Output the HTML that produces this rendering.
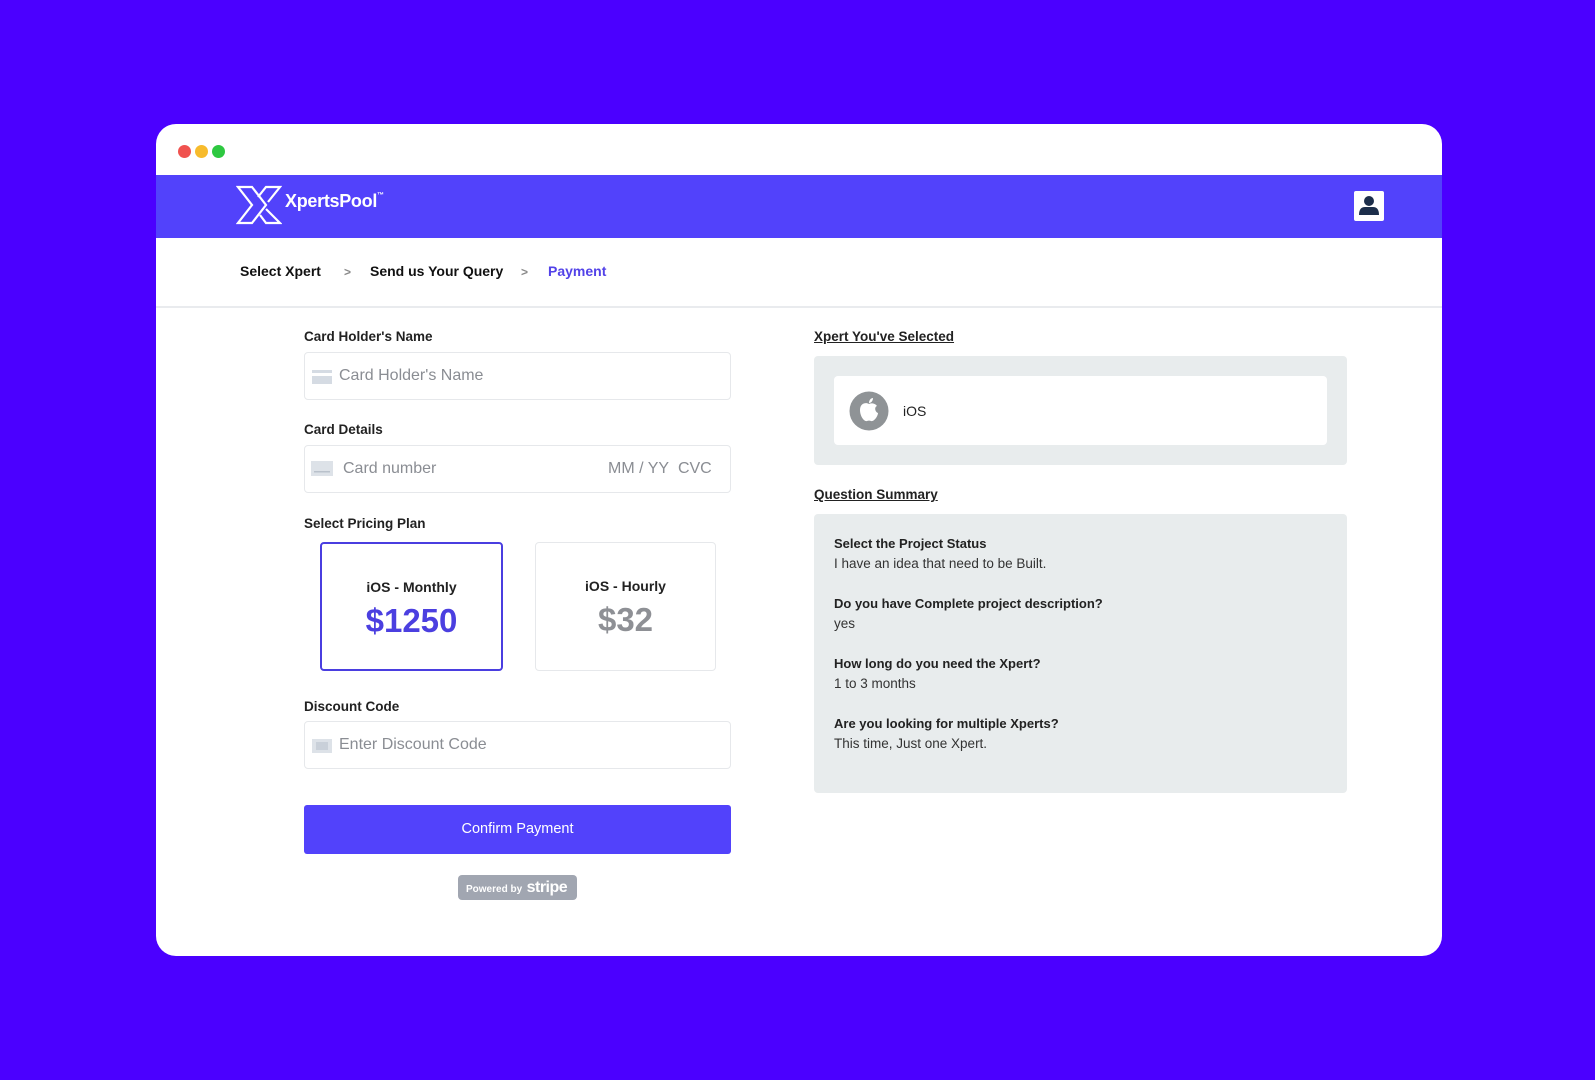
<!DOCTYPE html>
<html><head><meta charset="utf-8"><style>
*{box-sizing:border-box;margin:0;padding:0}
html,body{width:1595px;height:1080px;overflow:hidden;background:#4b00ff;font-family:"Liberation Sans",sans-serif}
.card{position:absolute;left:156px;top:124px;width:1286px;height:832px;background:#fff;border-radius:20px;overflow:hidden}
.dot{position:absolute;top:21px;width:13px;height:13px;border-radius:50%}
.hdr{position:absolute;left:0;top:51px;width:100%;height:63px;background:#5242fb}
.abs{position:absolute}
.crumb{position:absolute;top:139px;font-size:14px;font-weight:bold;color:#111}
.lbl{position:absolute;left:148px;font-size:13.5px;font-weight:bold;color:#222}
.inp{position:absolute;left:148px;width:427px;height:48px;border:1.5px solid #e6e8eb;border-radius:4px;background:#fff}
.ph{position:absolute;top:14px;font-size:16px;color:#8a8d93}
.plan{position:absolute;top:418px;height:129px;border-radius:4px;text-align:center}
.plan .t{position:absolute;width:100%;top:35px;font-size:14px;font-weight:bold;color:#222}
.plan .p{position:absolute;width:100%;top:58px;font-size:33px;font-weight:bold}
.q b{display:block;font-size:13px;color:#222;line-height:20px}
.q span{display:block;font-size:13.5px;color:#333;line-height:20px;margin-bottom:20px}
.ul{position:absolute;font-size:13.5px;font-weight:bold;color:#222;text-decoration:underline}
</style></head><body>
<div class="card">
 <div class="dot" style="left:22px;background:#f0524f"></div>
 <div class="dot" style="left:39px;background:#f7bb2c"></div>
 <div class="dot" style="left:56px;background:#2dc840"></div>
 <div class="hdr">
  <svg class="abs" style="left:80px;top:10px" width="46" height="40" viewBox="0 0 46 40" fill="none" stroke="#fff" stroke-width="2.2" stroke-linejoin="miter">
   <path d="M2 2 H16 L30 20 L16 38 H2 L16 20 Z"/>
   <path d="M22 12 L30 2 H44 L32 17"/>
   <path d="M30 24 L44 38 H30 L24 30"/>
  </svg>
  <div class="abs" style="left:129px;top:16px;font-size:18px;font-weight:bold;color:#fff;letter-spacing:-0.3px">XpertsPool<sup style="font-size:7px;vertical-align:10px">™</sup></div>
  <div class="abs" style="left:1198px;top:16px;width:30px;height:30px;background:#fff;border-radius:2px">
   <svg width="30" height="30" viewBox="0 0 30 30"><circle cx="15" cy="10" r="5" fill="#1c2e4a"/><path d="M5 24 Q5 16 11 16 H19 Q25 16 25 24 Z" fill="#1c2e4a"/></svg>
  </div>
 </div>
 <div class="crumb" style="left:84px">Select Xpert</div>
 <div class="crumb" style="left:188px;color:#888;font-size:12px;top:141px">&gt;</div>
 <div class="crumb" style="left:214px">Send us Your Query</div>
 <div class="crumb" style="left:365px;color:#888;font-size:12px;top:141px">&gt;</div>
 <div class="crumb" style="left:392px;color:#5242e8">Payment</div>
 <div class="abs" style="left:0;top:182px;width:100%;height:2px;background:#e9ebee"></div>

 <div class="lbl" style="top:205px">Card Holder's Name</div>
 <div class="inp" style="top:228px">
  <svg class="abs" style="left:7px;top:17px" width="20" height="14"><rect y="0" width="20" height="3" fill="#d5dbe3"/><rect y="6" width="20" height="8" fill="#d5dbe3"/></svg>
  <div class="ph" style="left:34px">Card Holder's Name</div></div>
 <div class="lbl" style="top:298px">Card Details</div>
 <div class="inp" style="top:321px">
  <svg class="abs" style="left:6px;top:15px" width="22" height="15"><rect width="22" height="15" fill="#dde2e8"/><rect x="3" y="10" width="16" height="1.5" fill="#b9c1cb"/></svg>
  <div class="ph" style="left:38px">Card number</div>
  <div class="ph" style="left:303px">MM / YY&nbsp; CVC</div></div>
 <div class="lbl" style="top:392px">Select Pricing Plan</div>
 <div class="plan" style="left:164px;width:183px;border:2px solid #4a3ee0"><div class="t">iOS - Monthly</div><div class="p" style="color:#4b3fe0">$1250</div></div>
 <div class="plan" style="left:379px;width:181px;border:1.5px solid #e6e8eb"><div class="t">iOS - Hourly</div><div class="p" style="color:#8e9095">$32</div></div>
 <div class="lbl" style="top:575px">Discount Code</div>
 <div class="inp" style="top:597px">
  <svg class="abs" style="left:7px;top:17px" width="20" height="14"><rect width="20" height="14" fill="#dde2e8"/><rect x="4" y="3" width="12" height="8" fill="#c9d0d9"/></svg>
  <div class="ph" style="left:34px">Enter Discount Code</div></div>
 <div class="abs" style="left:148px;top:681px;width:427px;height:49px;background:#5242fb;border-radius:3px;color:#fff;font-size:14.5px;text-align:center;line-height:49px">Confirm Payment</div>
 <div class="abs" style="left:302px;top:751px;width:119px;height:25px;background:#a1a6b1;border-radius:4px;color:#fff;line-height:25px;padding-left:8px;white-space:nowrap"><span style="font-size:10px;font-weight:bold">Powered by</span> <span style="font-size:16px;font-weight:bold;letter-spacing:-0.5px">stripe</span></div>

 <div class="ul" style="left:658px;top:205px">Xpert You've Selected</div>
 <div class="abs" style="left:658px;top:232px;width:533px;height:109px;background:#e8eced;border-radius:4px">
  <div class="abs" style="left:20px;top:20px;width:493px;height:69px;background:#fff;border-radius:4px">
   <svg class="abs" style="left:15px;top:15px" width="40" height="40" viewBox="0 0 40 40"><circle cx="20" cy="20" r="19.5" fill="#8f9396"/><path d="M20 13 C17 11 11 12 11 19 C11 25 15 31 18 30 C19 29.5 21 29.5 22 30 C25 31 29 25 29 22 C26 21 25 16 28 15 C26 12 22 12 20 13 Z" fill="#fff"/><path d="M20 12 C20 9 22 7 24 7 C24 10 22 12 20 12 Z" fill="#fff"/></svg>
   <div class="abs" style="left:69px;top:27px;font-size:14px;color:#222">iOS</div>
  </div>
 </div>
 <div class="ul" style="left:658px;top:363px">Question Summary</div>
 <div class="abs q" style="left:658px;top:390px;width:533px;height:279px;background:#e8eced;border-radius:4px;padding:20px 0 0 20px">
  <b>Select the Project Status</b><span>I have an idea that need to be Built.</span>
  <b>Do you have Complete project description?</b><span>yes</span>
  <b>How long do you need the Xpert?</b><span>1 to 3 months</span>
  <b>Are you looking for multiple Xperts?</b><span>This time, Just one Xpert.</span>
 </div>
</div>
</body></html>
